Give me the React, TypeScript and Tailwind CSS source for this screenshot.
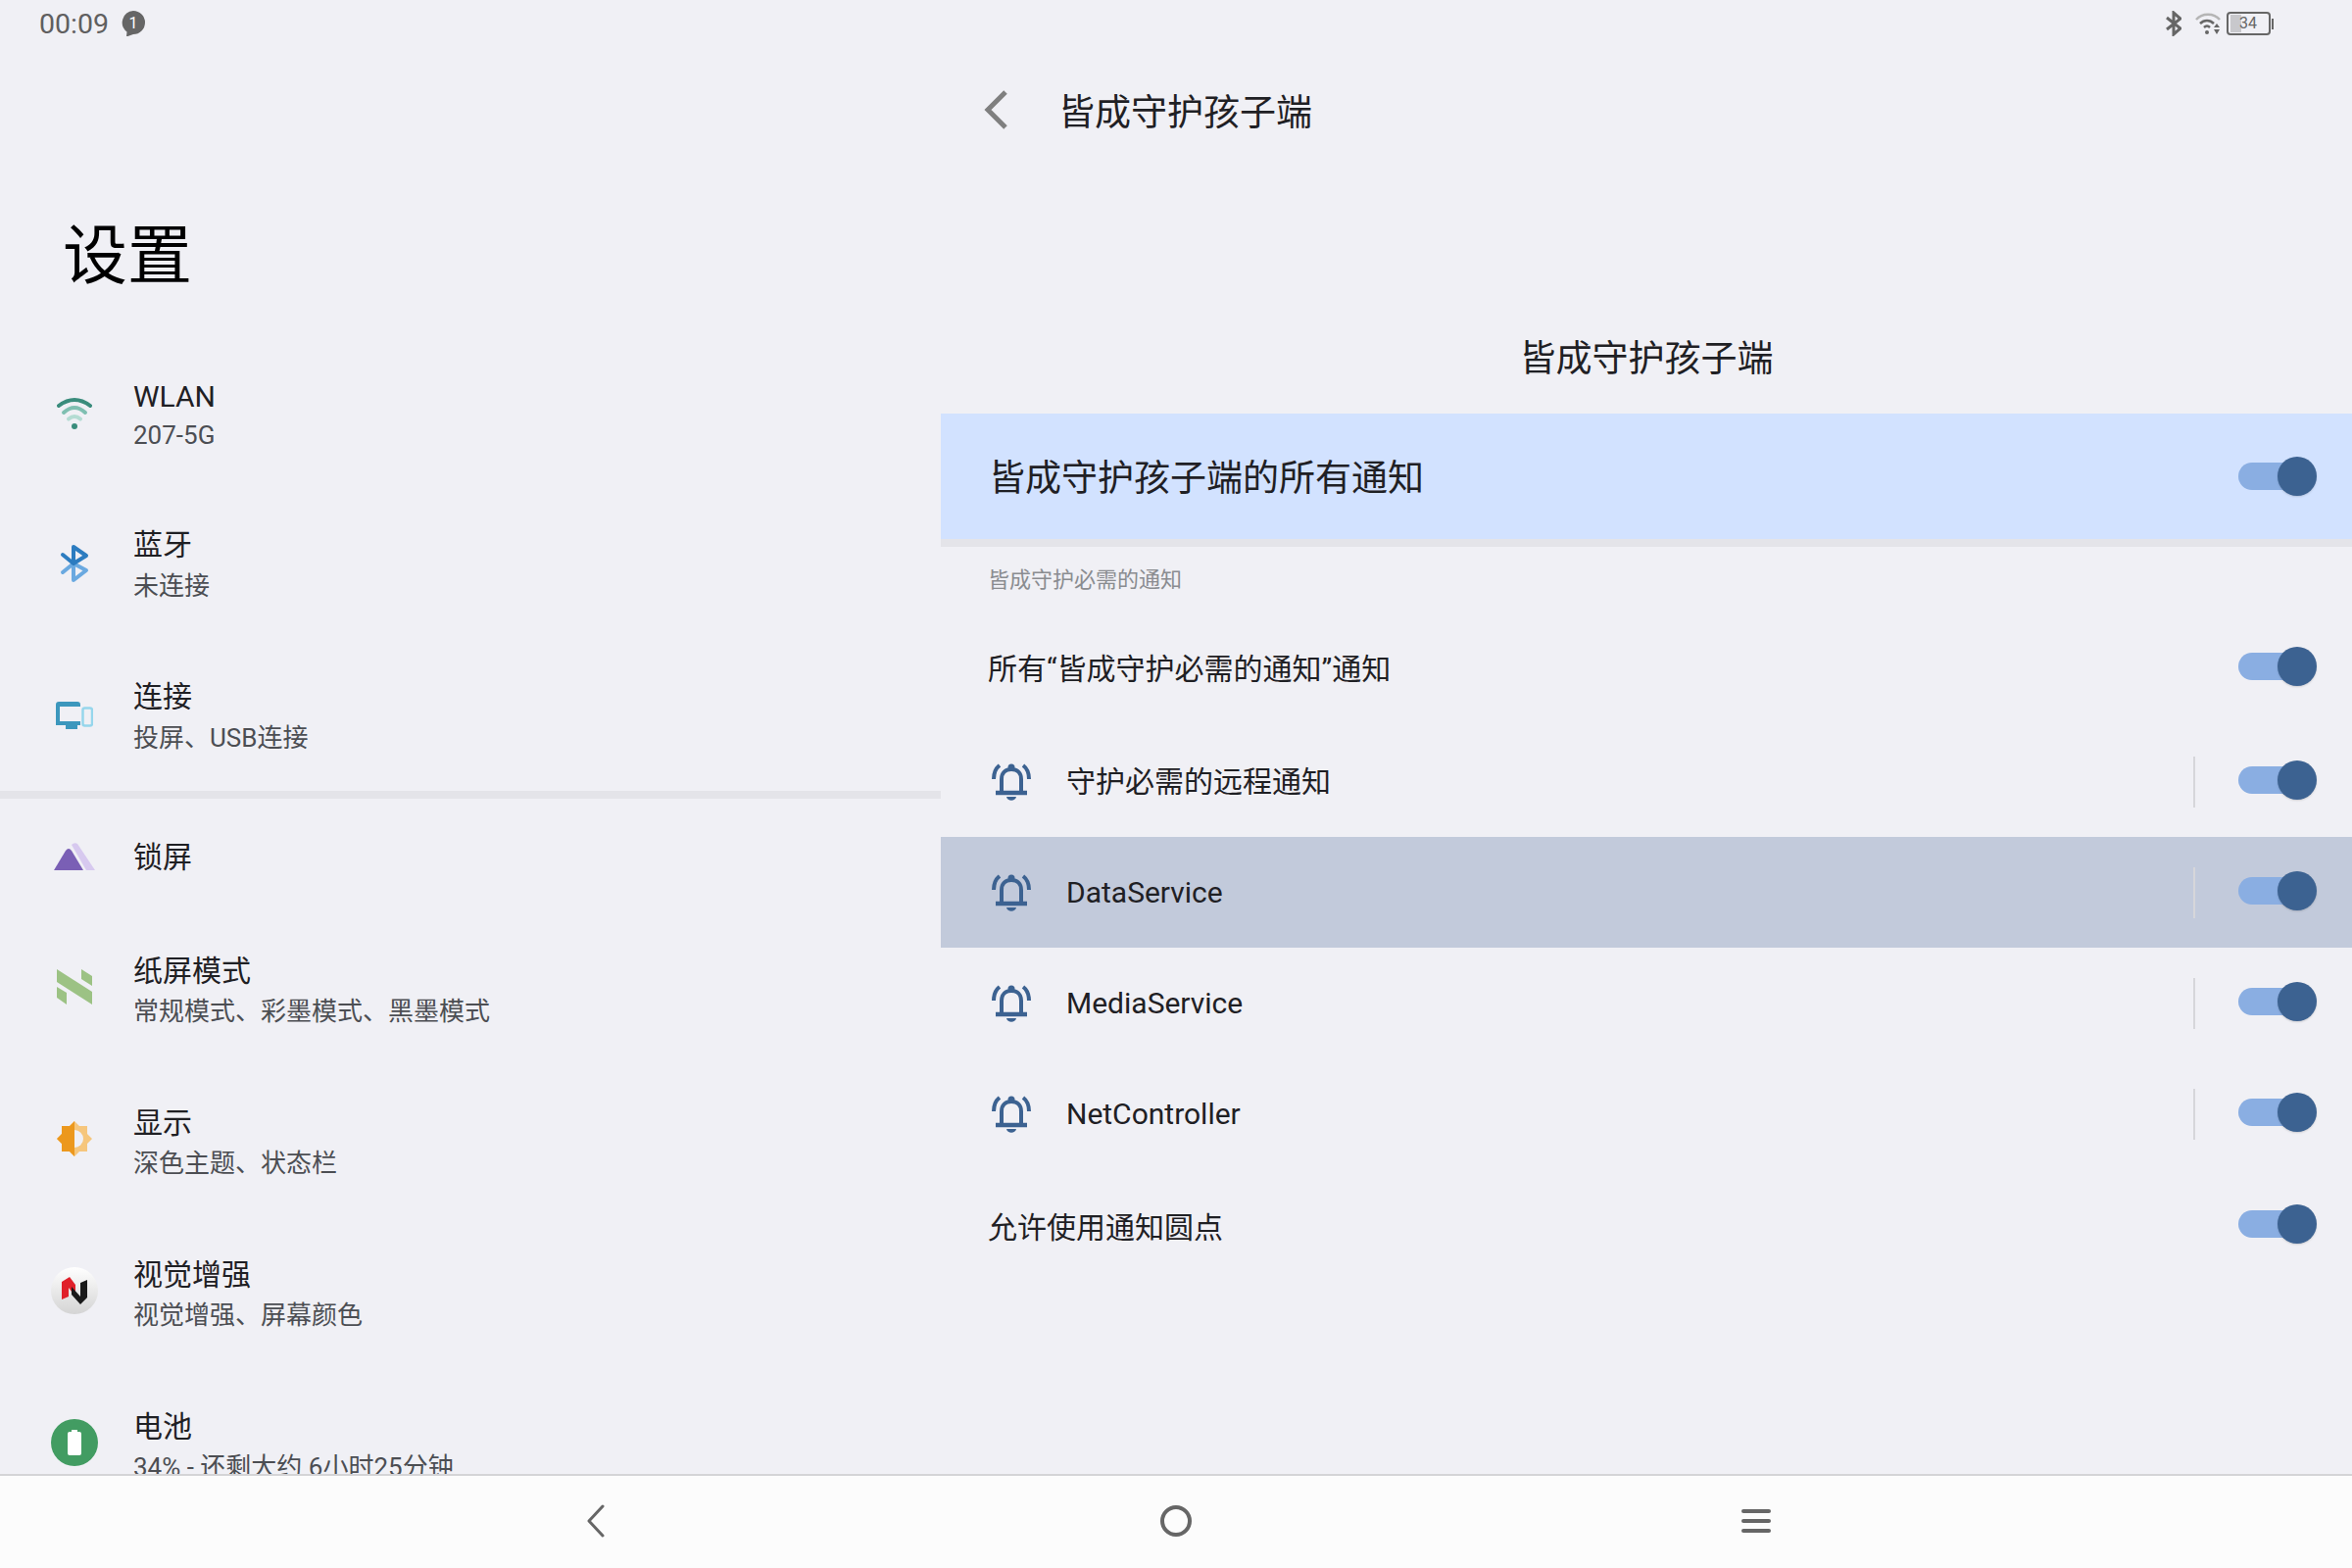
const cjk = "font-['Roboto','Noto_Sans_CJK_SC',sans-serif]";

function WifiIcon() {
  return (
    <svg width="36" height="34" viewBox="0 0 36 34" fill="none" strokeLinecap="round">
      <path d="M2 9Q18 -3 34 9" stroke="#3a8c7c" strokeWidth="4" />
      <path d="M7 16Q18 6 29 16" stroke="#7fbfb1" strokeWidth="4" />
      <path d="M12 22.500Q18 17.500 24 22.500" stroke="#b4dcd3" strokeWidth="4" />
      <circle cx="18" cy="30" r="3" fill="#3a8c7c" />
    </svg>
  );
}

function BluetoothIcon() {
  return (
    <svg width="30" height="38" viewBox="0 0 30 38" fill="none" strokeLinejoin="round" strokeLinecap="round">
      <path d="M3 28L14 19V36L27 26L14 19" stroke="#6aa9e0" strokeWidth="4" />
      <path d="M3 10L14 19V2L27 11L14 19" stroke="#2c7cc0" strokeWidth="4" />
    </svg>
  );
}

function ConnectIcon() {
  return (
    <svg width="38" height="28" viewBox="0 0 38 28">
      <path d="M0 3a3 3 0 0 1 3-3h19a3 3 0 0 1 3 3v2H4v15h21v4H0Z" fill="#3c97bd" />
      <rect x="10" y="24" width="12" height="4" fill="#3c97bd" />
      <rect x="27.500" y="6.500" width="9.500" height="18" rx="2" fill="none" stroke="#96d6ec" strokeWidth="2.5" />
    </svg>
  );
}

function LockIcon() {
  return (
    <svg width="42" height="28" viewBox="0 0 42 28">
      <path d="M18 2Q21 -1 24 1L42 28H33Z" fill="#d7c9ef" />
      <path d="M12 8Q15 4 18 8L30 28H0Z" fill="#7a5fb5" />
    </svg>
  );
}

function PaperIcon() {
  return (
    <svg width="36" height="36" viewBox="0 0 36 36" fill="#9cc284">
      <path d="M0 0L36 23V36L0 13Z" />
      <path d="M25 0L36 7V17L25 10Z" />
      <path d="M0 18L10 24V36L0 29Z" />
    </svg>
  );
}

function DisplayIcon() {
  return (
    <svg width="36" height="36" viewBox="0 0 36 36">
      <path d="M18 0L23 5H31V13L36 18L31 23V31H23L18 36L13 31H5V23L0 18L5 13V5H13Z" fill="#f6c67c" />
      <path d="M18 0L13 5H5V13L0 18L5 23V31H13L18 36Z" fill="#ec981d" />
      <path d="M18 9A9 9 0 0 1 18 27Z" fill="#f0f0f5" />
    </svg>
  );
}

function VisualIcon() {
  return (
    <div className="w-12 h-12 rounded-full bg-gradient-to-b from-white to-[#d4d4d4] flex items-center justify-center">
      <svg width="28" height="28" viewBox="0 0 28 28">
        <path d="M1 5L9 0L15 8V20L8 11V20L1 23Z" fill="#e0202a" />
        <path d="M20 6L27 3V21L20 28L11 18V10L20 20Z" fill="#1a1a1a" />
      </svg>
    </div>
  );
}

function BatteryCircle() {
  return (
    <div className="w-12 h-12 rounded-full bg-[#429c62] flex items-center justify-center">
      <svg width="14" height="26" viewBox="0 0 14 26">
        <path d="M4 0H10V2H12A2 2 0 0 1 14 4V24A2 2 0 0 1 12 26H2A2 2 0 0 1 0 24V4A2 2 0 0 1 2 2H4Z" fill="#fff" />
      </svg>
    </div>
  );
}

function BellIcon() {
  return (
    <svg width="40" height="38" viewBox="0 0 40 38" fill="none" stroke="#3c6291">
      <path d="M10 29V16C10 10 14 6 20 6C26 6 30 10 30 16V29" strokeWidth="4" />
      <path d="M4 30H36" strokeWidth="4.5" />
      <circle cx="20" cy="4" r="3.5" fill="#3c6291" stroke="none" />
      <path d="M15 34H25C24 39 16 39 15 34Z" fill="#3c6291" stroke="none" />
      <path d="M2 16C2 10 4 5 8 2" strokeWidth="4" />
      <path d="M38 16C38 10 36 5 32 2" strokeWidth="4" />
    </svg>
  );
}

function Toggle({ className = "" }: { className?: string }) {
  return (
    <div className={`relative w-20 h-10 flex items-center shrink-0 ${className}`}>
      <div className="w-[66px] h-7 rounded-full bg-[#8aaee2]" />
      <div className="absolute right-0 top-0 w-10 h-10 rounded-full bg-[#3c6291] shadow-[0_1px_2px_rgba(0,0,0,0.15)]" />
    </div>
  );
}

const leftTop = [
  { icon: <WifiIcon />, title: "WLAN", sub: "207-5G", latin: true, iconClass: "" },
  { icon: <BluetoothIcon />, title: "蓝牙", sub: "未连接", top: true, iconClass: "-mt-[4px]" },
  { icon: <ConnectIcon />, title: "连接", sub: "投屏、USB连接", top: true, iconClass: "-mt-[4px]" },
];

const leftBottom = [
  { icon: <PaperIcon />, title: "纸屏模式", sub: "常规模式、彩墨模式、黑墨模式", iconClass: "-mt-[8px]" },
  { icon: <DisplayIcon />, title: "显示", sub: "深色主题、状态栏", iconClass: "-mt-[8px]" },
  { icon: <VisualIcon />, title: "视觉增强", sub: "视觉增强、屏幕颜色", iconClass: "-mt-[8px]" },
  { icon: <BatteryCircle />, title: "电池", sub: "34% - 还剩大约 6小时25分钟", iconClass: "-mt-[8px]" },
];

function LeftRow({
  icon,
  title,
  sub,
  latin,
  top,
  iconClass,
}: {
  icon: React.ReactNode;
  title: string;
  sub: string;
  latin?: boolean;
  top?: boolean;
  iconClass: string;
}) {
  return (
    <div className="flex items-center h-[155px] shrink-0 pl-6">
      <div className={`w-[104px] mr-2 flex justify-center shrink-0 ${iconClass}`}>{icon}</div>
      <div className={`flex flex-col ${latin ? "mt-[3px]" : "pb-[2px]"}`}>
        <div className={`text-[30px] leading-[42px] text-[#1f2024] ${latin ? "" : top ? "mb-[3px]" : "mb-[2px]"}`}>
          {title}
        </div>
        <div className="text-[26px] leading-[36px] text-[#4c4e53]">{sub}</div>
      </div>
    </div>
  );
}

function ChannelRow({ name, active }: { name: string; active?: boolean }) {
  return (
    <div className={`flex items-center h-[113px] pl-[52px] pr-9 ${active ? "bg-[#c2cadb]" : ""}`}>
      <BellIcon />
      <div className="ml-[36px] text-[30px] text-[#1f2024] flex-1">{name}</div>
      <div className="w-[2px] h-[52px] bg-[#d6d6da] mr-[44px]" />
      <Toggle className="-mt-[3px]" />
    </div>
  );
}

export default function App() {
  return (
    <div className={`w-[2400px] h-[1600px] overflow-hidden flex flex-col bg-[#f0f0f5] ${cjk}`}>
      <div className="relative flex-1 min-h-0 flex overflow-hidden">
        {/* status bar */}
        <div className="absolute inset-x-0 top-0 h-12 flex items-center pl-10 pr-[80px] z-10">
          <span className="text-[28.5px] text-[#5f5f5f] mt-[2px]">00:09</span>
          <svg className="ml-3" width="26" height="26" viewBox="0 0 26 26">
            <path d="M13 0a12 12 0 0 1 0 24L6 26.500L6.500 21.500A12 12 0 0 1 13 0Z" fill="#666" />
            <text x="13" y="17.500" textAnchor="middle" fontSize="16" fill="#fff" fontFamily="Roboto">1</text>
          </svg>
          <div className="ml-auto flex items-center">
            <svg width="16" height="26" viewBox="0 0 16 26" fill="none" stroke="#666" strokeWidth="3">
              <path d="M1 7L15 18L8 24V2L15 8L1 19" />
            </svg>
            <svg className="ml-[14px]" width="26" height="24" viewBox="0 0 26 24" fill="none">
              <path d="M1 8C7 1 19 1 25 8" stroke="#b5b5b5" strokeWidth="2.5" />
              <path d="M5 12C9 8 15 8 19 12" stroke="#666" strokeWidth="2.5" />
              <path d="M9 16C11 14 13 14 15 16" stroke="#666" strokeWidth="2.5" />
              <circle cx="12" cy="21" r="2" fill="#666" />
              <path d="M22 12L25 16H19ZM22 23L25 18H19Z" fill="#666" />
            </svg>
            <div className="ml-[6px] w-[45px] h-6 rounded-[4px] border-2 border-[#666] relative flex items-center">
              <div className="w-[11px] h-[18px] ml-[2px] bg-[#c8c8cc]" />
              <span className="absolute left-[11px] top-[-1px] text-[16px] leading-[22px] text-[#666]">34</span>
            </div>
            <div className="ml-[1px] w-[2px] h-[11px] bg-[#666]" />
          </div>
        </div>

        {/* left panel */}
        <div className="w-[960px] shrink-0 flex flex-col overflow-hidden">
          <div className="h-[344px] shrink-0 pl-[64px] pt-[220px] text-[66px] leading-[84px] text-black">设置</div>
          {leftTop.map((r) => (
            <LeftRow key={r.title} {...r} />
          ))}
          <div className="h-2 shrink-0 -mt-[2px] bg-[#e4e4e9]" />
          <div className="flex items-center h-[118px] shrink-0 pl-[55px]">
            <div className="w-[81px] shrink-0">
              <LockIcon />
            </div>
            <div className="text-[30px] text-[#1f2024]">锁屏</div>
          </div>
          {leftBottom.map((r) => (
            <LeftRow key={r.title} {...r} />
          ))}
        </div>

        {/* right panel */}
        <div className="flex-1 flex flex-col">
          <div className="h-[226px] shrink-0 pt-[91px] pl-[44px] flex items-start">
            <svg width="24" height="40" viewBox="0 0 24 40" fill="none" stroke="#7f7f7f" strokeWidth="5" className="mt-[1px]">
              <path d="M22 2L4 20L22 38" />
            </svg>
            <div className="ml-[52px] text-[37px] leading-[50px] text-[#1f2024]">皆成守护孩子端</div>
          </div>
          <div className="h-[196px] shrink-0 flex items-center justify-center pt-[86px] text-[37px] text-[#1f2024]">皆成守护孩子端</div>
          <div className="h-[128px] shrink-0 bg-[#d2e2ff] flex items-center justify-between pl-[49px] pr-9">
            <span className="text-[37px] text-[#1f2024] mt-[6px]">皆成守护孩子端的所有通知</span>
            <Toggle />
          </div>
          <div className="h-2 shrink-0 bg-[#e4e4e9]" />
          <div className="h-[66px] shrink-0 flex items-center pl-[48px] text-[22px] text-[#8a8c90]">皆成守护必需的通知</div>
          <div className="h-[117px] shrink-0 flex items-center justify-between pl-[48px] pr-9">
            <span className="text-[30px] text-[#1f2024]">所有“皆成守护必需的通知”通知</span>
            <Toggle className="-mt-[5px]" />
          </div>
          <ChannelRow name="守护必需的远程通知" />
          <ChannelRow name="DataService" active />
          <ChannelRow name="MediaService" />
          <ChannelRow name="NetController" />
          <div className="h-[115px] shrink-0 flex items-center justify-between pl-[48px] pr-9">
            <span className="text-[30px] text-[#1f2024] mt-[3px]">允许使用通知圆点</span>
            <Toggle className="-mt-[3px]" />
          </div>
        </div>
      </div>

      {/* nav bar */}
      <div className="h-24 shrink-0 bg-[#fcfcfc] border-t-2 border-[#d4d4d6] grid grid-cols-3 pb-[2px]">
        <div className="flex items-center justify-end pr-[182px]">
          <svg width="20" height="34" viewBox="0 0 20 34" fill="none" stroke="#666" strokeWidth="3" strokeLinecap="round" strokeLinejoin="round">
            <path d="M17 2L3 17L17 32" />
          </svg>
        </div>
        <div className="flex items-center justify-center">
          <div className="w-8 h-8 rounded-full border-4 border-[#666]" />
        </div>
        <div className="flex items-center pl-[177px]">
          <div className="w-[30px] flex flex-col gap-[6px]">
            <div className="h-[4px] bg-[#666] rounded-full" />
            <div className="h-[4px] bg-[#666] rounded-full" />
            <div className="h-[4px] bg-[#666] rounded-full" />
          </div>
        </div>
      </div>
    </div>
  );
}
